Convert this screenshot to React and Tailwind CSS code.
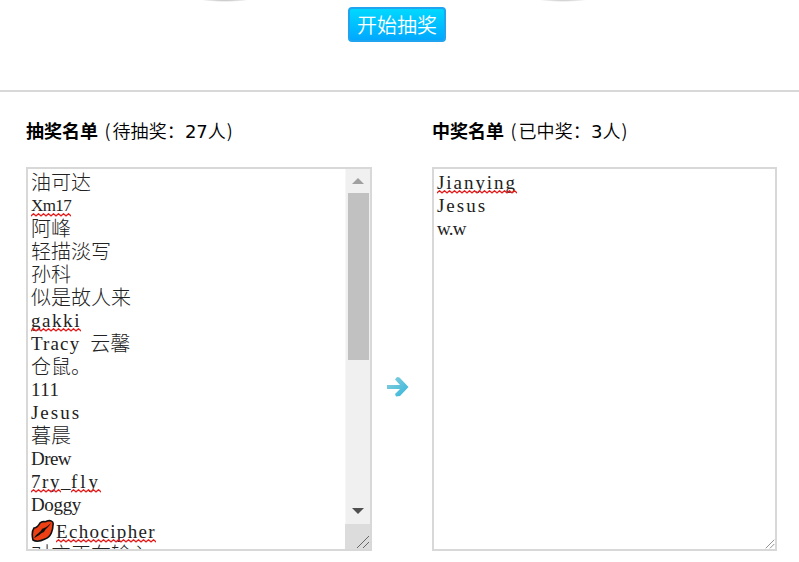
import React from "react";

function Squiggle() {
  return (
    <svg className="absolute left-0 bottom-[0px] w-full h-[4px]" aria-hidden="true">
      <defs>
        <pattern id="wave" width="5" height="4" patternUnits="userSpaceOnUse">
          <path d="M-0.5 3.2 L2.5 0.8 L5.5 3.2" fill="none" stroke="#e51c1c" strokeWidth="1.4" />
        </pattern>
      </defs>
      <rect width="100%" height="4" fill="url(#wave)" />
    </svg>
  );
}

function Word({ text, size = "text-[19px]", tracking = "", wrong = false }) {
  return (
    <span className={"relative inline-block h-[23px] whitespace-pre leading-[23px] font-['Liberation_Serif','Noto_Sans_CJK_SC',serif] " + size + " " + tracking}>
      {text}
      {wrong && <Squiggle />}
    </span>
  );
}

function Han({ children }) {
  return <span className="leading-[21px]">{children}</span>;
}

function Row({ children }) {
  return <div className="flex h-[23px] whitespace-pre leading-[23px]">{children}</div>;
}

function Lips() {
  return (
    <svg className="mt-[-1px] h-[24px] w-[25px]" viewBox="0 0 25 24">
      <path d="M2 21 C1 17 1 12 3 9 C6 9 7 7 9 4 C12 1 14 4 16 2 C19 1 23 2 22 6 C22 11 20 18 14 20 C10 22 5 23 2 21 Z" fill="#ee4014" stroke="#111" strokeWidth="1.6" />
      <path d="M3 19 C6 14 9 14 11 10 C13 9 16 8 20 4 C17 9 15 9 13 13 C10 14 8 17 3 19 Z" fill="#111" />
    </svg>
  );
}

function Grip({ className }) {
  return (
    <svg className={className} viewBox="0 0 14 14">
      <path d="M1 13 L13 1 M7 13 L13 7" stroke="#666" strokeWidth="1" fill="none" />
    </svg>
  );
}

function Heading({ title, before, count }) {
  return (
    <h2 className="h-[24px] whitespace-pre text-[18px] leading-[20px] font-['DejaVu_Sans','Noto_Sans_CJK_SC',sans-serif]">
      <b className="font-bold">{title}</b>
      <span className="ml-[6.5px]">
        <span className="tracking-[0.1px] font-['Noto_Sans_CJK_SC',sans-serif] font-[350]"><span className="inline-block w-[8px]">(</span>{before}：</span>
        {count}
        <span className="font-['Noto_Sans_CJK_SC',sans-serif] font-[350]">人<span className="ml-px">)</span></span>
      </span>
    </h2>
  );
}

const boxClass = "mt-[23px] flex h-[384px] border-2 border-[#d8d8d8] bg-white text-[20px] text-[#222] overflow-hidden font-['Noto_Sans_CJK_SC',sans-serif] font-light";

export default function App() {
  return (
    <div className="h-[562px] w-[799px] overflow-hidden bg-white text-black">
      <header className="relative flex h-[92px] justify-center border-b-2 border-[#d8d8d8] pt-[7px] pr-[5px]">
        <div className="absolute top-[-5px] left-[197px] h-[7px] w-[56px] rounded-[50%] bg-[radial-gradient(ellipse,#888_0%,#fff_70%)]" />
        <div className="absolute top-[-5px] left-[535px] h-[7px] w-[56px] rounded-[50%] bg-[radial-gradient(ellipse,#999_0%,#fff_70%)]" />
        <button className="h-[35px] w-[98px] rounded-[4px] border-2 border-[#20a4f0] bg-gradient-to-b from-[#00d8ff] to-[#00a8ff] text-[20px] leading-[31px] whitespace-nowrap text-white font-['Noto_Sans_CJK_SC',sans-serif] font-[350]">
          开始抽奖
        </button>
      </header>
      <main className="flex pt-[28px] pl-[26px]">
        <section className="w-[346px]">
          <Heading title="抽奖名单" before="待抽奖" count="27" />
          <div className={boxClass}>
            <div className="flex-1 pt-[2px] pl-[3px]">
              <Row><Han>油可达</Han></Row>
              <Row><Word text="Xm17" size="text-[17px]" tracking="tracking-[-0.6px]" wrong /></Row>
              <Row><Han>阿峰</Han></Row>
              <Row><Han>轻描淡写</Han></Row>
              <Row><Han>孙科</Han></Row>
              <Row><Han>似是故人来</Han></Row>
              <Row><Word text="gakki" tracking="tracking-[1.56px]" wrong /></Row>
              <Row><Word text="Tracy" tracking="tracking-[1.14px]" /><span className="ml-[10px] leading-[21px]">云馨</span></Row>
              <Row><Han>仓鼠。</Han></Row>
              <Row><Word text="111" tracking="tracking-[0.5px]" /></Row>
              <Row><Word text="Jesus" tracking="tracking-[1.98px]" /></Row>
              <Row><Han>暮晨</Han></Row>
              <Row><Word text="Drew" tracking="tracking-[-0.55px]" /></Row>
              <Row>
                <Word text="7ry" tracking="tracking-[1.55px]" wrong />
                <Word text="_" tracking="tracking-[0.5px]" />
                <Word text="fly" tracking="tracking-[2.96px]" wrong />
              </Row>
              <Row><Word text="Doggy" tracking="tracking-[-0.35px]" /></Row>
              <div className="flex h-[27px] pt-[4px] leading-[23px]">
                <Lips />
                <Word text="Echocipher" tracking="tracking-[1.35px]" wrong />
              </div>
              <Row><Han>对方正在输入</Han></Row>
            </div>
            <div className="flex w-[25px] flex-col border-l border-[#f7f7f7] bg-[#f0f0f0]">
              <svg className="h-[24px] w-[24px] shrink-0" viewBox="0 0 24 24">
                <path d="M6 15 L12 9 L18 15 Z" fill="#a0a0a0" />
              </svg>
              <div className="ml-[2px] h-[167px] w-[21px] shrink-0 bg-[#c1c1c1]" />
              <div className="flex-1" />
              <svg className="h-[24px] w-[24px] shrink-0" viewBox="0 0 24 24">
                <path d="M6 8 L12 14 L18 8 Z" fill="#505050" />
              </svg>
              <div className="ml-[-1px] flex h-[25px] shrink-0 items-end justify-end bg-[#dcdcdc]">
                <Grip className="h-[14px] w-[14px]" />
              </div>
            </div>
          </div>
        </section>
        <div className="flex w-[60px] pl-[14px] pt-[256px]">
          <svg className="h-[22px] w-[24px]" viewBox="0 0 24 22">
            <defs>
              <linearGradient id="arrow" x1="0" y1="0" x2="1" y2="1">
                <stop offset="0" stopColor="#8bd0dc" />
                <stop offset="1" stopColor="#35b5dc" />
              </linearGradient>
            </defs>
            <path d="M1 9 H14 L9 3.5 L11 1 L13.5 1.5 L22.5 11 L14 20 L10 20.5 L9 18 L14 13 H1 Z" fill="url(#arrow)" />
          </svg>
        </div>
        <section className="w-[345px]">
          <Heading title="中奖名单" before="已中奖" count="3" />
          <div className={boxClass}>
            <div className="flex-1 pt-[2px] pl-[3px]">
              <Row><Word text="Jianying" tracking="tracking-[1.95px]" wrong /></Row>
              <Row><Word text="Jesus" tracking="tracking-[1.98px]" /></Row>
              <Row><Word text="w.w" tracking="tracking-[-0.7px]" /></Row>
            </div>
            <Grip className="h-[10px] w-[10px] self-end" />
          </div>
        </section>
      </main>
    </div>
  );
}
